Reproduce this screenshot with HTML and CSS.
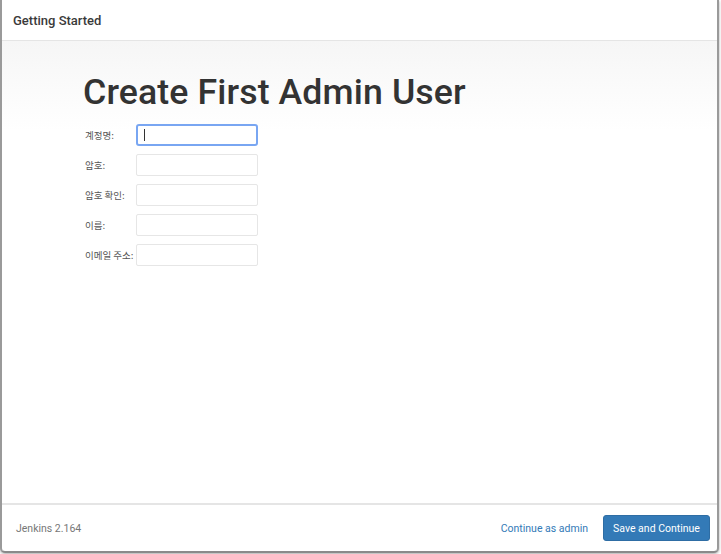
FILE: index.html
```html
<!DOCTYPE html>
<html>
<head>
<meta charset="utf-8">
<link rel="stylesheet" href="styles.css">
</head>
<body>
<div class="modal">
  <div class="header">Getting Started</div>
  <div class="content">
    <h1 class="title">Create First Admin User</h1>
    <div class="form">
      <div class="row"><label class="label">계정명:</label><div class="input focused"><span class="caret"></span></div></div>
      <div class="row"><label class="label">암호:</label><div class="input"></div></div>
      <div class="row"><label class="label">암호 확인:</label><div class="input"></div></div>
      <div class="row"><label class="label">이름:</label><div class="input"></div></div>
      <div class="row"><label class="label">이메일 주소:</label><div class="input"></div></div>
    </div>
  </div>
  <div class="footer">
    <span class="version">Jenkins 2.164</span>
    <div class="actions">
      <span class="link">Continue as admin</span>
      <span class="btn">Save and Continue</span>
    </div>
  </div>
</div>
</body>
</html>
```
FILE: styles.css
```css
html, body { margin: 0; padding: 0; background: #fff; }
body { font-family: Roboto, "Noto Sans CJK KR", sans-serif; color: #333; width: 721px; height: 554px; overflow: hidden; }
.modal {
  width: 715px; height: 551px;
  border-left: 2px solid #9a9a9a;
  border-right: 2px solid #9a9a9a;
  border-bottom: 2px solid #8a8a8a;
  border-radius: 0 0 5px 5px;
  box-shadow: 0 1px 3px rgba(0,0,0,0.35);
  display: flex; flex-direction: column;
  background: #fff;
}
.header {
  height: 41px; box-sizing: border-box; flex: none;
  border-bottom: 1px solid #e5e5e5;
  padding: 13px 0 0 11px;
  font-size: 13px; font-weight: 500; color: #3a3a3a;
}
.content {
  flex: 1;
  background: linear-gradient(to bottom, #f6f6f6 0px, #ffffff 90px);
  padding: 31px 0 0 81px;
}
.title {
  margin: 0; font-size: 35.7px; font-weight: 500; color: #333; line-height: 40px; letter-spacing: 0.1px;
}
.form { margin-top: 12px; display: flex; flex-direction: column; gap: 8px; }
.row { display: flex; align-items: center; height: 22px; }
.label { flex: none; width: 51px; white-space: nowrap; font-size: 9.5px; color: #555; padding-left: 2px; font-family: "Noto Sans CJK KR", sans-serif; }
.input {
  flex: none;
  width: 120px; height: 20px; border: 1px solid #e6e6e6; border-radius: 2px; background: #fff;
  display: flex; align-items: center;
}
.input.focused { border: 2px solid #79a6f2; width: 118px; height: 18px; border-radius: 3px; }
.caret { display: block; width: 1px; height: 12px; background: #333; margin-left: 6px; }
.footer {
  height: 46px; flex: none; border-top: 2px solid #e5e5e5;
  display: flex; align-items: center; justify-content: space-between;
  padding: 0 7px 0 14px;
}
.version { font-size: 10.5px; color: #777; }
.actions { display: flex; align-items: center; gap: 15px; }
.link { font-size: 10.5px; color: #337ab7; }
.btn {
  background: #337ab7; color: #fff; font-size: 10.5px; border-radius: 3px;
  height: 26px; width: 107px; display: flex; align-items: center; justify-content: center;
  border: 1px solid #2e6da4; box-sizing: border-box;
}
```
